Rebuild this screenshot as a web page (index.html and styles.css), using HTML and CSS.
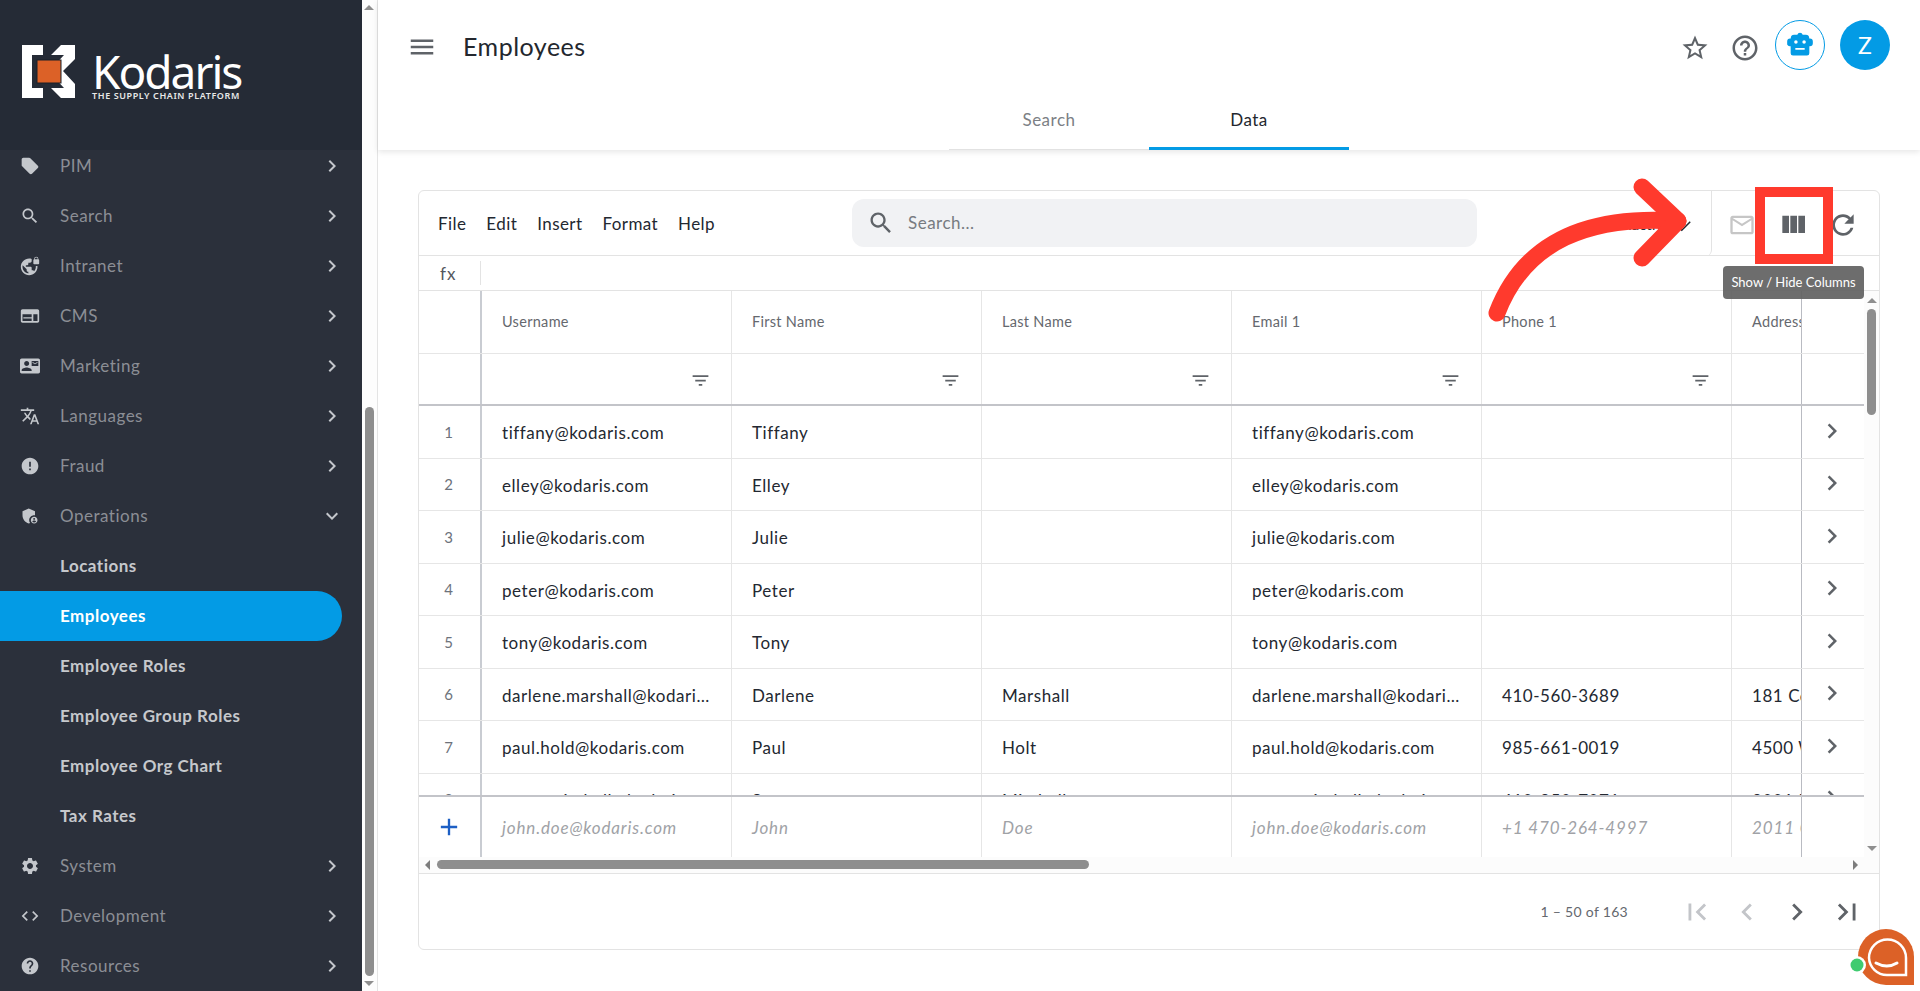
FILE: index.html
```html
<!DOCTYPE html>
<html lang="en">
<head>
<meta charset="utf-8">
<title>Employees</title>
<link rel="stylesheet" href="styles.css">
</head>
<body>
<svg class="defs" width="0" height="0" aria-hidden="true">
  <symbol id="i-tag" viewBox="0 0 24 24"><path d="M21.41 11.58l-9-9C12.05 2.22 11.55 2 11 2H4c-1.1 0-2 .9-2 2v7c0 .55.22 1.05.59 1.42l9 9c.36.36.86.58 1.41.58.55 0 1.05-.22 1.41-.59l7-7c.37-.36.59-.86.59-1.41 0-.55-.23-1.06-.59-1.42z"/></symbol>
  <symbol id="i-search" viewBox="0 0 24 24"><path d="M15.5 14h-.79l-.28-.27C15.41 12.59 16 11.11 16 9.5 16 5.91 13.09 3 9.5 3S3 5.91 3 9.5 5.91 16 9.5 16c1.61 0 3.09-.59 4.23-1.57l.27.28v.79l5 4.99L20.49 19l-4.99-5zm-6 0C7.01 14 5 11.99 5 9.5S7.01 5 9.5 5 14 7.01 14 9.5 11.99 14 9.5 14z"/></symbol>
  <symbol id="i-vpn" viewBox="0 0 24 24"><path d="M22 4v-.5C22 2.12 20.88 1 19.5 1S17 2.12 17 3.5V4c-.55 0-1 .45-1 1v4c0 .55.45 1 1 1h5c.55 0 1-.45 1-1V5c0-.55-.45-1-1-1zm-.8 0h-3.4v-.5c0-.94.76-1.7 1.7-1.7s1.7.76 1.7 1.7V4zm-2.28 8c.04.33.08.66.08 1 0 2.08-.8 3.97-2.1 5.39-.26-.81-1-1.39-1.9-1.39h-1v-3c0-.55-.45-1-1-1H7v-2h2c.55 0 1-.45 1-1V8h2c1.1 0 2-.9 2-2V3.46c-.95-.3-1.95-.46-3-.46C5.48 3 1 7.48 1 13s4.48 10 10 10 10-4.48 10-10c0-.34-.02-.67-.05-1h-2.03zM10 20.93c-3.95-.49-7-3.85-7-7.93 0-.62.08-1.21.21-1.79L8 16v1c0 1.1.9 2 2 2v1.93z"/></symbol>
  <symbol id="i-cms" viewBox="0 0 24 24"><path fill-rule="evenodd" d="M3 4h18c1.1 0 2 .9 2 2v12c0 1.1-.9 2-2 2H3c-1.1 0-2-.9-2-2V6c0-1.1.9-2 2-2zm0 6v8h11v-3H4v-1.5h10V10H3zm13 0v8h5v-8h-5z"/></symbol>
  <symbol id="i-mail-card" viewBox="0 0 24 24"><path d="M21 8V7l-3 2-3-2v1l3 2 3-2zm1-5H2C.9 3 0 3.9 0 5v14c0 1.1.9 2 2 2h20c1.1 0 1.99-.9 1.99-2L24 5c0-1.1-.9-2-2-2zM8 6c1.66 0 3 1.34 3 3s-1.34 3-3 3-3-1.34-3-3 1.34-3 3-3zm6 12H2v-1c0-2 4-3.1 6-3.1s6 1.1 6 3.1v1zm8-6h-8V6h8v6z"/></symbol>
  <symbol id="i-translate" viewBox="0 0 24 24"><path d="M12.87 15.07l-2.54-2.51.03-.03c1.74-1.94 2.98-4.17 3.71-6.53H17V4h-7V2H8v2H1v1.99h11.17C11.5 7.92 10.44 9.75 9 11.35 8.07 10.32 7.3 9.19 6.69 8h-2c.73 1.63 1.73 3.17 2.98 4.56l-5.09 5.02L4 19l5-5 3.11 3.11.76-2.04zM18.5 10h-2L12 22h2l1.12-3h4.75L21 22h2l-4.5-12zm-2.62 7l1.62-4.33L19.12 17h-3.24z"/></symbol>
  <symbol id="i-error" viewBox="0 0 24 24"><path d="M12 2C6.48 2 2 6.48 2 12s4.48 10 10 10 10-4.48 10-10S17.52 2 12 2zm1 15h-2v-2h2v2zm0-4h-2V7h2v6z"/></symbol>
  <symbol id="i-shield" viewBox="0 0 24 24"><path d="M17 11c.34 0 .67.04 1 .09V6.27L10.5 3 3 6.27v4.91c0 4.54 3.2 8.79 7.5 9.82.55-.13 1.08-.32 1.6-.55-.69-.98-1.1-2.17-1.1-3.45 0-3.31 2.69-6 6-6z"/><path d="M17 13c-2.21 0-4 1.79-4 4s1.79 4 4 4 4-1.79 4-4-1.79-4-4-4zm0 1.38c.62 0 1.12.51 1.12 1.12s-.51 1.12-1.12 1.12-1.12-.51-1.12-1.12.5-1.12 1.12-1.12zm0 5.37c-.93 0-1.74-.46-2.24-1.17.05-.72 1.51-1.08 2.24-1.08s2.19.36 2.24 1.08c-.5.71-1.31 1.17-2.24 1.17z"/></symbol>
  <symbol id="i-gear" viewBox="0 0 24 24"><path d="M19.14 12.94c.04-.3.06-.61.06-.94 0-.32-.02-.64-.07-.94l2.03-1.58c.18-.14.23-.41.12-.61l-1.92-3.32c-.12-.22-.37-.29-.59-.22l-2.39.96c-.5-.38-1.03-.7-1.62-.94l-.36-2.54c-.04-.24-.24-.41-.48-.41h-3.84c-.24 0-.43.17-.47.41l-.36 2.54c-.59.24-1.13.57-1.62.94l-2.39-.96c-.22-.08-.47 0-.59.22L2.74 8.87c-.12.21-.08.47.12.61l2.03 1.58c-.05.3-.09.63-.09.94s.02.64.07.94l-2.03 1.58c-.18.14-.23.41-.12.61l1.92 3.32c.12.22.37.29.59.22l2.39-.96c.5.38 1.03.7 1.62.94l.36 2.54c.05.24.24.41.48.41h3.84c.24 0 .44-.17.47-.41l.36-2.54c.59-.24 1.13-.56 1.62-.94l2.39.96c.22.08.47 0 .59-.22l1.92-3.32c.12-.22.07-.47-.12-.61l-2.01-1.58zM12 15.6c-1.98 0-3.6-1.62-3.6-3.6s1.62-3.6 3.6-3.6 3.6 1.62 3.6 3.6-1.62 3.6-3.6 3.6z"/></symbol>
  <symbol id="i-code" viewBox="0 0 24 24"><path d="M9.4 16.6L4.8 12l4.6-4.6L8 6l-6 6 6 6 1.4-1.4zm5.2 0l4.6-4.6-4.6-4.6L16 6l6 6-6 6-1.4-1.4z"/></symbol>
  <symbol id="i-help" viewBox="0 0 24 24"><path d="M12 2C6.48 2 2 6.48 2 12s4.48 10 10 10 10-4.48 10-10S17.52 2 12 2zm1 17h-2v-2h2v2zm2.07-7.75l-.9.92C13.45 12.9 13 13.5 13 15h-2v-.5c0-1.1.45-2.1 1.17-2.83l1.24-1.26c.37-.36.59-.86.59-1.41 0-1.1-.9-2-2-2s-2 .9-2 2H8c0-2.21 1.79-4 4-4s4 1.79 4 4c0 .88-.36 1.68-.93 2.25z"/></symbol>
  <symbol id="i-right" viewBox="0 0 24 24"><path d="M10 6L8.59 7.41 13.17 12l-4.58 4.59L10 18l6-6z"/></symbol>
  <symbol id="i-left" viewBox="0 0 24 24"><path d="M15.41 7.41L14 6l-6 6 6 6 1.41-1.41L10.83 12z"/></symbol>
  <symbol id="i-down" viewBox="0 0 24 24"><path d="M16.59 8.59L12 13.17 7.41 8.59 6 10l6 6 6-6z"/></symbol>
  <symbol id="i-menu" viewBox="0 0 24 24"><path d="M3 18h18v-2H3v2zm0-5h18v-2H3v2zm0-7v2h18V6H3z"/></symbol>
  <symbol id="i-star" viewBox="0 0 24 24"><path d="M22 9.24l-7.19-.62L12 2 9.19 8.63 2 9.24l5.46 4.73L5.82 21 12 17.27 18.18 21l-1.63-7.03L22 9.24zM12 15.4l-3.76 2.27 1-4.28-3.32-2.88 4.38-.38L12 6.1l1.71 4.04 4.38.38-3.32 2.88 1 4.28L12 15.4z"/></symbol>
  <symbol id="i-help-o" viewBox="0 0 24 24"><path d="M11 18h2v-2h-2v2zm1-16C6.48 2 2 6.48 2 12s4.48 10 10 10 10-4.48 10-10S17.52 2 12 2zm0 18c-4.41 0-8-3.59-8-8s3.59-8 8-8 8 3.59 8 8-3.59 8-8 8zm0-14c-2.21 0-4 1.79-4 4h2c0-1.1.9-2 2-2s2 .9 2 2c0 2-3 1.75-3 5h2c0-2.25 3-2.5 3-5 0-2.21-1.79-4-4-4z"/></symbol>
  <symbol id="i-robot" viewBox="0 0 24 24"><path fill-rule="evenodd" d="M12 1.500a2.400 2.400 0 0 1 2.300 1.800H17a3 3 0 0 1 2.900 3.200h.6a2.500 2.500 0 0 1 2.500 2.500v1.500a2.500 2.500 0 0 1-2.500 2.500H20v6a2 2 0 0 1-2 2H6a2 2 0 0 1-2-2v-6h-.5A2.500 2.500 0 0 1 1 11.500V9a2.500 2.500 0 0 1 2.500-2.500h.6A3 3 0 0 1 7 3.300h2.700A2.400 2.400 0 0 1 12 1.500zM8.500 8a1.500 1.500 0 1 0 0 3 1.500 1.500 0 0 0 0-3zm7 0a1.500 1.500 0 1 0 0 3 1.500 1.500 0 0 0 0-3zM8 14.500V16h8v-1.500H8z"/></symbol>
  <symbol id="i-envelope" viewBox="0 0 24 24"><path d="M20 4H4c-1.1 0-1.99.9-1.99 2L2 18c0 1.1.9 2 2 2h16c1.1 0 2-.9 2-2V6c0-1.1-.9-2-2-2zm0 14H4V8l8 5 8-5v10zm-8-7L4 6h16l-8 5z"/></symbol>
  <symbol id="i-columns" viewBox="0 0 24 24"><path d="M10 18h5V5h-5v13zm-6 0h5V5H4v13zM16 5v13h5V5h-5z"/></symbol>
  <symbol id="i-refresh" viewBox="0 0 24 24"><path d="M17.65 6.35C16.2 4.9 14.21 4 12 4c-4.42 0-7.99 3.58-7.99 8s3.57 8 7.99 8c3.73 0 6.84-2.55 7.73-6h-2.08c-.82 2.33-3.04 4-5.65 4-3.31 0-6-2.69-6-6s2.69-6 6-6c1.66 0 3.14.69 4.22 1.78L13 11h7V4l-2.35 2.35z"/></symbol>
  <symbol id="i-filter" viewBox="0 0 24 24"><path d="M10 18h4v-2h-4v2zM3 6v2h18V6H3zm3 7h12v-2H6v2z"/></symbol>
  <symbol id="i-add" viewBox="0 0 24 24"><path d="M19 13h-6v6h-2v-6H5v-2h6V5h2v6h6v2z"/></symbol>
  <symbol id="i-first" viewBox="0 0 24 24"><path d="M18.410 16.590L13.820 12l4.590-4.590L17 6l-6 6 6 6zM6 6h2v12H6z"/></symbol>
  <symbol id="i-last" viewBox="0 0 24 24"><path d="M5.590 7.410L10.180 12l-4.590 4.590L7 18l6-6-6-6zM16 6h2v12h-2z"/></symbol>
  <symbol id="i-check" viewBox="0 0 24 24"><path d="M9 16.170L4.830 12l-1.420 1.410L9 19 21 7l-1.410-1.410z"/></symbol>
</svg>

<div class="app">
  <aside class="sidebar">
    <div class="brand">
      <svg class="brand-mark" viewBox="0 0 53 53" width="53" height="53" aria-hidden="true">
        <path fill="#fff" d="M0 0h21v10H10v33h11v10H0z"/>
        <path fill="#fff" d="M29 10L39 0h14v14L41 26l12 13v14H39L29 43h13L30 30v-7l12-13z"/>
        <rect x="15" y="15" width="24" height="23" fill="#dc6127" stroke="#1b2029" stroke-width="1"/>
      </svg>
      <div class="brand-text">
        <div class="brand-name">Kodaris</div>
        <div class="brand-tag">THE SUPPLY CHAIN PLATFORM</div>
      </div>
    </div>
    <nav class="nav">
      <div class="nav-item"><svg class="nav-icon"><use href="#i-tag"/></svg><span class="nav-label">PIM</span><svg class="nav-arrow"><use href="#i-right"/></svg></div>
      <div class="nav-item"><svg class="nav-icon"><use href="#i-search"/></svg><span class="nav-label">Search</span><svg class="nav-arrow"><use href="#i-right"/></svg></div>
      <div class="nav-item"><svg class="nav-icon"><use href="#i-vpn"/></svg><span class="nav-label">Intranet</span><svg class="nav-arrow"><use href="#i-right"/></svg></div>
      <div class="nav-item"><svg class="nav-icon"><use href="#i-cms"/></svg><span class="nav-label">CMS</span><svg class="nav-arrow"><use href="#i-right"/></svg></div>
      <div class="nav-item"><svg class="nav-icon"><use href="#i-mail-card"/></svg><span class="nav-label">Marketing</span><svg class="nav-arrow"><use href="#i-right"/></svg></div>
      <div class="nav-item"><svg class="nav-icon"><use href="#i-translate"/></svg><span class="nav-label">Languages</span><svg class="nav-arrow"><use href="#i-right"/></svg></div>
      <div class="nav-item"><svg class="nav-icon"><use href="#i-error"/></svg><span class="nav-label">Fraud</span><svg class="nav-arrow"><use href="#i-right"/></svg></div>
      <div class="nav-item"><svg class="nav-icon"><use href="#i-shield"/></svg><span class="nav-label">Operations</span><svg class="nav-arrow"><use href="#i-down"/></svg></div>
      <div class="nav-sub">Locations</div>
      <div class="nav-sub active">Employees</div>
      <div class="nav-sub">Employee Roles</div>
      <div class="nav-sub">Employee Group Roles</div>
      <div class="nav-sub">Employee Org Chart</div>
      <div class="nav-sub">Tax Rates</div>
      <div class="nav-item"><svg class="nav-icon"><use href="#i-gear"/></svg><span class="nav-label">System</span><svg class="nav-arrow"><use href="#i-right"/></svg></div>
      <div class="nav-item"><svg class="nav-icon"><use href="#i-code"/></svg><span class="nav-label">Development</span><svg class="nav-arrow"><use href="#i-right"/></svg></div>
      <div class="nav-item"><svg class="nav-icon"><use href="#i-help"/></svg><span class="nav-label">Resources</span><svg class="nav-arrow"><use href="#i-right"/></svg></div>
    </nav>
  </aside>
  <div class="side-scroll">
    <span class="tri tri-up"></span>
    <span class="side-track"><span class="side-thumb"></span></span>
    <span class="tri tri-down"></span>
  </div>

  <main class="main">
    <header class="topbar">
      <div class="top-row">
        <svg class="menu-btn"><use href="#i-menu"/></svg>
        <h1 class="page-title">Employees</h1>
        <div class="top-actions">
          <svg class="top-icon"><use href="#i-star"/></svg>
          <svg class="top-icon top-icon-last"><use href="#i-help-o"/></svg>
          <span class="bot-btn"><svg class="bot-icon"><use href="#i-robot"/></svg></span>
          <span class="avatar">Z</span>
        </div>
      </div>
      <div class="tabs">
        <div class="tab">Search</div>
        <div class="tab tab-active">Data</div>
      </div>
    </header>

    <section class="content">
      <div class="card">
        <div class="toolbar">
          <div class="menus"><span>File</span><span>Edit</span><span>Insert</span><span>Format</span><span>Help</span></div>
          <div class="searchbox"><svg class="search-icon"><use href="#i-search"/></svg><span class="search-ph">Search...</span></div>
          <div class="status"><span class="status-text">Inactive</span><svg class="check"><use href="#i-check"/></svg></div>
          <div class="actions">
            <svg class="act act-off"><use href="#i-envelope"/></svg>
            <svg class="act act-col"><use href="#i-columns"/></svg>
            <svg class="act act-ref"><use href="#i-refresh"/></svg>
          </div>
        </div>
        <div class="formula"><span class="fx">fx</span><span class="fx-div"></span></div>

        <div class="grid-wrap">
          <div class="grid">
            <div class="row head">
              <div class="idx"></div><div class="cell">Username</div><div class="cell">First Name</div><div class="cell">Last Name</div><div class="cell">Email 1</div><div class="cell">Phone 1</div><div class="cell">Address 1</div>
              <div class="frozen"></div>
            </div>
            <div class="row filters">
              <div class="idx"></div>
              <div class="cell"><svg class="filter"><use href="#i-filter"/></svg></div>
              <div class="cell"><svg class="filter"><use href="#i-filter"/></svg></div>
              <div class="cell"><svg class="filter"><use href="#i-filter"/></svg></div>
              <div class="cell"><svg class="filter"><use href="#i-filter"/></svg></div>
              <div class="cell"><svg class="filter"><use href="#i-filter"/></svg></div>
              <div class="cell"></div>
              <div class="frozen"></div>
            </div>
            <div class="rows">
              <div class="row data"><div class="idx">1</div><div class="cell">tiffany@kodaris.com</div><div class="cell">Tiffany</div><div class="cell"></div><div class="cell">tiffany@kodaris.com</div><div class="cell"></div><div class="cell"></div><div class="frozen"><svg class="go"><use href="#i-right"/></svg></div></div>
              <div class="row data"><div class="idx">2</div><div class="cell">elley@kodaris.com</div><div class="cell">Elley</div><div class="cell"></div><div class="cell">elley@kodaris.com</div><div class="cell"></div><div class="cell"></div><div class="frozen"><svg class="go"><use href="#i-right"/></svg></div></div>
              <div class="row data"><div class="idx">3</div><div class="cell">julie@kodaris.com</div><div class="cell">Julie</div><div class="cell"></div><div class="cell">julie@kodaris.com</div><div class="cell"></div><div class="cell"></div><div class="frozen"><svg class="go"><use href="#i-right"/></svg></div></div>
              <div class="row data"><div class="idx">4</div><div class="cell">peter@kodaris.com</div><div class="cell">Peter</div><div class="cell"></div><div class="cell">peter@kodaris.com</div><div class="cell"></div><div class="cell"></div><div class="frozen"><svg class="go"><use href="#i-right"/></svg></div></div>
              <div class="row data"><div class="idx">5</div><div class="cell">tony@kodaris.com</div><div class="cell">Tony</div><div class="cell"></div><div class="cell">tony@kodaris.com</div><div class="cell"></div><div class="cell"></div><div class="frozen"><svg class="go"><use href="#i-right"/></svg></div></div>
              <div class="row data"><div class="idx">6</div><div class="cell">darlene.marshall@kodaris.com</div><div class="cell">Darlene</div><div class="cell">Marshall</div><div class="cell">darlene.marshall@kodaris.com</div><div class="cell">410-560-3689</div><div class="cell">181 Commerce Dr</div><div class="frozen"><svg class="go"><use href="#i-right"/></svg></div></div>
              <div class="row data"><div class="idx">7</div><div class="cell">paul.hold@kodaris.com</div><div class="cell">Paul</div><div class="cell">Holt</div><div class="cell">paul.hold@kodaris.com</div><div class="cell">985-661-0019</div><div class="cell">4500 West St</div><div class="frozen"><svg class="go"><use href="#i-right"/></svg></div></div>
              <div class="row data"><div class="idx">8</div><div class="cell">steve.mitchell@kodaris.com</div><div class="cell">Steve</div><div class="cell">Mitchell</div><div class="cell">steve.mitchell@kodaris.com</div><div class="cell">410-850-7071</div><div class="cell">2001 Main St</div><div class="frozen"><svg class="go"><use href="#i-right"/></svg></div></div>
            </div>
            <div class="row add-row">
              <div class="idx"><svg class="add"><use href="#i-add"/></svg></div><div class="cell">john.doe@kodaris.com</div><div class="cell">John</div><div class="cell">Doe</div><div class="cell">john.doe@kodaris.com</div><div class="cell">+1 470-264-4997</div><div class="cell">2011 Oak Ave</div>
              <div class="frozen"></div>
            </div>
          </div>
          <div class="vscroll">
            <span class="tri tri-up"></span>
            <span class="v-track"><span class="v-thumb"></span></span>
            <span class="tri tri-down"></span>
          </div>
        </div>
        <div class="hscroll">
          <span class="tri tri-left"></span>
          <span class="h-track"><span class="h-thumb"></span></span>
          <span class="tri tri-right"></span>
        </div>

        <div class="pager">
          <span class="pager-text">1 – 50 of 163</span>
          <svg class="pg pg-off"><use href="#i-first"/></svg>
          <svg class="pg pg-off"><use href="#i-left"/></svg>
          <svg class="pg"><use href="#i-right"/></svg>
          <svg class="pg"><use href="#i-last"/></svg>
        </div>
      </div>
    </section>
  </main>
</div>

<div class="tooltip">Show / Hide Columns</div>
<div class="red-box"></div>
<svg class="red-arrow" viewBox="0 0 230 160" width="230" height="160" aria-hidden="true">
  <path d="M17 143C45 70 110 45 198 51" fill="none" stroke="#ff3a2d" stroke-width="17" stroke-linecap="round"/>
  <path d="M162 17L198 51L162 88" fill="none" stroke="#ff3a2d" stroke-width="17" stroke-linecap="round" stroke-linejoin="round"/>
</svg>
<svg class="chat" viewBox="0 0 66 66" width="66" height="66" aria-hidden="true">
  <path fill="#dc6127" d="M9 29A28 28 0 0 1 65 29V57H37A28 28 0 0 1 9 29Z"/>
  <path fill="none" stroke="#fff" stroke-width="2.500" d="M20 30A18 18 0 0 1 57 30V47H38A18 18 0 0 1 20 30Z"/>
  <path fill="none" stroke="#fff" stroke-width="3" stroke-linecap="round" d="M27 35Q38 41 48 35"/>
  <circle cx="8" cy="37" r="9" fill="#fff"/>
  <circle cx="8" cy="37" r="6.500" fill="#3fcb70"/>
</svg>
</body>
</html>
```
FILE: styles.css
```css
* { box-sizing: border-box; }
html, body { margin: 0; height: 100%; overflow: hidden; }
body { font-family: Lato, "Noto Sans", sans-serif; color: #232831; background: #fff; }
.defs { position: absolute; }
svg { fill: currentColor; display: block; }

.app { display: flex; height: 991px; }

/* Sidebar */
.sidebar { width: 362px; flex: none; display: flex; flex-direction: column; background: #2b303b; overflow: hidden; }
.brand { height: 150px; flex: none; background: #252b36; display: flex; align-items: flex-start; padding: 45px 0 0 22px; position: relative; z-index: 1; }
.brand-text { margin-left: 17px; color: #fff; }
.brand-name { font-family: "Noto Sans", sans-serif; font-size: 46px; line-height: 40px; margin-top: 6px; letter-spacing: -2px; height: 40px; }
.brand-tag { font-family: "Noto Sans", sans-serif; font-size: 9px; line-height: 10px; font-weight: 600; letter-spacing: .6px; color: #e8e8e8; white-space: nowrap; }
.nav { margin-top: -9px; }
.nav-item, .nav-sub { height: 50px; display: flex; align-items: center; font-size: 17px; letter-spacing: .5px; padding-bottom: 2px; }
.nav-item { padding-left: 60px; color: #8b8e95; position: relative; }
.nav-icon { position: absolute; left: 20px; top: 15px; width: 20px; height: 20px; color: #c4c7cc; }
.nav-label { flex: 1; }
.nav-arrow { width: 24px; height: 24px; margin: 2px 18px 0 0; color: #c4c7cc; }
.nav-sub { padding-left: 60px; font-weight: 700; color: #c6c8cc; width: 342px; }
.nav-sub.active { background: #039be5; color: #fff; border-radius: 0 25px 25px 0; }

.side-scroll { width: 16px; flex: none; background: #fdfdfd; border-right: 1px solid #e4e4e4; display: flex; flex-direction: column; align-items: center; padding: 5px 1px 5px 0; }
.side-track { flex: 1; width: 9px; padding-top: 397px; padding-bottom: 5px; display: flex; }
.side-thumb { flex: 1; background: #8e8e8e; border-radius: 5px; }
.tri { width: 0; height: 0; flex: none; border-style: solid; border-color: transparent; }
.tri-up { border-width: 0 5px 5px; border-bottom-color: #8f8f8f; }
.tri-down { border-width: 5px 5px 0; border-top-color: #8f8f8f; }
.tri-left { border-width: 5px 5px 5px 0; border-right-color: #7d7d7d; }
.tri-right { border-width: 5px 0 5px 5px; border-left-color: #7d7d7d; }

/* Main */
.main { flex: 1; min-width: 0; display: flex; flex-direction: column; }
.topbar { height: 150px; flex: none; display: flex; flex-direction: column; background: #fff; box-shadow: 0 2px 6px rgba(0,0,0,.1); position: relative; }
.top-row { height: 90px; display: flex; align-items: flex-start; padding: 20px 30px 0 0; }
.menu-btn { width: 30px; height: 30px; margin: 12px 0 0 29px; color: #5f6368; }
.page-title { margin: -1px 0 0 26px; font-size: 25px; font-weight: 400; line-height: 54px; height: 54px; letter-spacing: .5px; color: #23272e; }
.top-actions { margin-left: auto; display: flex; align-items: center; height: 50px; }
.top-icon { width: 30px; height: 30px; color: #5f6368; margin-right: 20px; margin-top: 6px; }
.top-icon-last { margin-right: 12px; }
.bot-btn { width: 50px; height: 50px; border: 1px solid #039be5; border-radius: 50%; display: flex; align-items: center; justify-content: center; margin-left: 3px; }
.bot-icon { width: 28px; height: 28px; color: #039be5; }
.avatar { width: 50px; height: 50px; border-radius: 50%; background: #039be5; color: #fff; display: flex; align-items: center; justify-content: center; font-size: 23px; margin-left: 15px; }
.tabs { height: 60px; display: flex; padding-left: 571px; }
.tab { width: 200px; display: flex; align-items: center; justify-content: center; padding-bottom: 1px; font-size: 17px; letter-spacing: .5px; color: #7c7f85; border-bottom: 1px solid #e2e2e2; }
.tab-active { color: #23272e; border-bottom: 3px solid #039be5; padding-top: 2px; }

.content { flex: 1; padding: 40px 40px 41px 40px; min-height: 0; }
.card { height: 760px; border: 1px solid #e3e3e3; border-radius: 6px; display: flex; flex-direction: column; overflow: hidden; background: #fff; }

.toolbar { height: 65px; flex: none; display: flex; align-items: center; border-bottom: 1px solid #e3e3e3; }
.menus { width: 433px; flex: none; display: flex; gap: 20px; padding-left: 19px; font-size: 17px; letter-spacing: .42px; padding-top: 1px; }
.searchbox { width: 625px; height: 48px; flex: none; background: #f1f2f4; border-radius: 12px; display: flex; align-items: center; padding-left: 15px; margin-bottom: 1px; }
.search-icon { width: 28px; height: 28px; color: #5f6368; }
.search-ph { margin-left: 13px; font-size: 17px; letter-spacing: .5px; color: #777b81; }
.status { width: 235px; height: 65px; flex: none; border-right: 1px solid #e3e3e3; border-radius: 0 0 6px 0; display: flex; align-items: center; justify-content: flex-end; padding-right: 18px; }
.status-text { font-size: 15px; padding-top: 2px; margin-right: 4px; color: #232831; }
.check { width: 18px; height: 18px; margin-top: 6px; color: #232831; }
.actions { flex: 1; display: flex; align-items: center; padding: 4px 0 0 16px; }
.act { width: 28px; height: 28px; color: #5f6368; flex: none; }
.act-off { color: #c6c6c6; }
.act-col { width: 32px; height: 32px; margin-left: 21px; }
.act-ref { width: 32px; height: 32px; margin-left: 18px; }

.formula { height: 35px; flex: none; display: flex; align-items: center; border-bottom: 1px solid #e3e3e3; padding-left: 21px; }
.fx { width: 40px; font-size: 17px; letter-spacing: 1px; color: #55585e; }
.fx-div { width: 1px; height: 24px; background: #e3e3e3; }

.grid-wrap { height: 566px; flex: none; display: flex; }
.grid { flex: 1; min-width: 0; display: flex; flex-direction: column; overflow: hidden; }
.row { display: flex; flex: none; position: relative; overflow: hidden; border-bottom: 1px solid #e6e6e6; }
.idx { width: 63px; flex: none; border-right: 2px solid #c9ccd2; display: flex; align-items: center; justify-content: center; font-size: 15px; letter-spacing: 0; color: #6d727b; padding-right: 2px; }
.cell { width: 250px; flex: none; padding: 0 20px; border-right: 1px solid #e6e6e6; overflow: hidden; text-overflow: ellipsis; white-space: nowrap; display: block; }
.frozen { position: absolute; right: 0; top: 0; bottom: 0; width: 63px; background: #fff; border-left: 1px solid #b9bbc2; display: flex; align-items: center; justify-content: center; }

.head { height: 63px; font-size: 14.500px; letter-spacing: .3px; color: #65686e; }
.head .cell { line-height: 62px; }
.filters { height: 52px; border-bottom: 2px solid #c3c4c9; }
.filters .cell { position: relative; }
.filter { position: absolute; right: 20px; top: 16px; width: 21px; height: 21px; color: #5f6368; }
.rows { height: 389px; flex: none; overflow: hidden; }
.data { height: 52.500px; font-size: 17px; letter-spacing: .55px; }
.data .cell { line-height: 54px; }
.go { width: 30px; height: 30px; color: #5f6368; margin: 0 3px 2px 0; }
.add-row { height: 62px; border-top: 2px solid #c3c4c9; border-bottom: 0; font-size: 17px; letter-spacing: .85px; font-style: italic; color: #a0a2a6; }
.add-row .cell { line-height: 61px; }
.add { width: 28px; height: 28px; color: #1d5fc4; }

.vscroll { width: 15px; flex: none; background: #fcfcfc; display: flex; flex-direction: column; align-items: center; padding: 7px 0 6px; }
.v-track { flex: 1; width: 9px; padding: 6px 0 431px; display: flex; }
.v-thumb { flex: 1; background: #8e8e8e; border-radius: 5px; }
.hscroll { height: 17px; flex: none; background: #fcfcfc; border-bottom: 1px solid #e3e3e3; display: flex; align-items: center; padding: 0 21px 1px 6px; }
.h-track { flex: 1; height: 9px; padding: 0 764px 0 7px; display: flex; }
.h-thumb { flex: 1; background: #8e8e8e; border-radius: 5px; }

.pager { flex: 1; display: flex; align-items: center; justify-content: flex-end; padding-right: 15px; }
.pager-text { font-size: 14px; letter-spacing: .3px; color: #65686e; margin-right: 52px; }
.pg { width: 34px; height: 34px; color: #5f6368; margin-left: 16px; }
.pg:first-of-type { margin-left: 0; }
.pg-off { color: #c3c5c9; }

/* Overlays: tutorial annotations and floating widgets */
.tooltip { position: absolute; left: 1723px; top: 266px; width: 141px; height: 33px; padding-bottom: 2px; background: rgba(97,97,97,.92); color: #fff; font-size: 13px; border-radius: 4px; display: flex; align-items: center; justify-content: center; }
.red-box { position: absolute; left: 1755px; top: 187px; width: 78px; height: 77px; border: 10px solid #ff3a2d; }
.red-arrow { position: absolute; left: 1480px; top: 170px; }
.chat { position: absolute; left: 1849px; top: 928px; }
```
